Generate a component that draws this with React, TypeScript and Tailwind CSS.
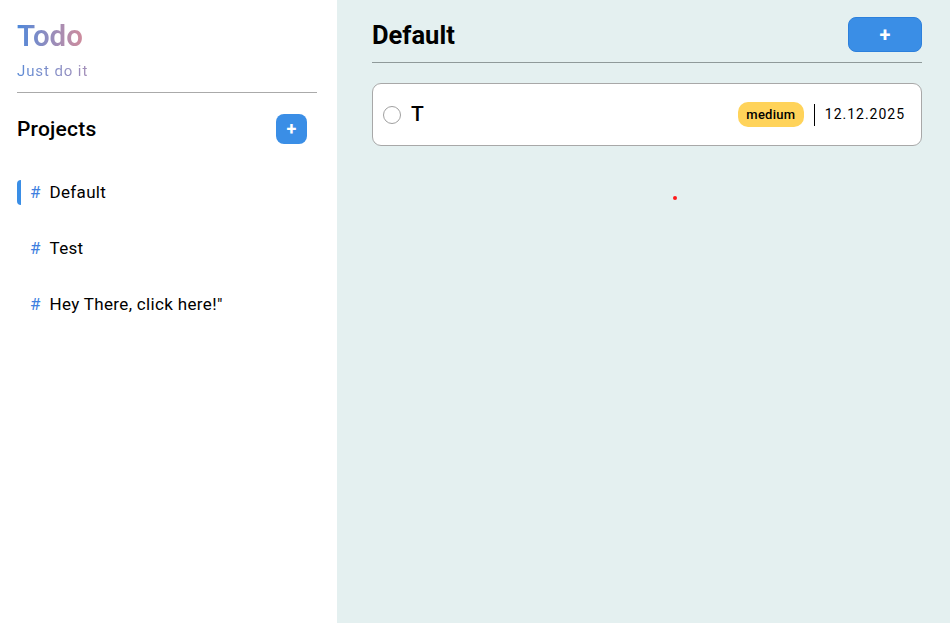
import React from "react";

const projects = ["Default", "Test", 'Hey There, click here!"'];

export default function App() {
  return (
    <div className="flex h-[623px] w-[950px] font-['Roboto',sans-serif] text-black">
      <aside className="flex w-[337px] flex-col bg-white px-[17px] pt-[18px]">
        <div className="mr-[3px] border-b border-[#aaaaaa] pb-[12px]">
          <h1 className="w-fit bg-gradient-to-r from-[#4a87da] to-[#cf8b9b] bg-clip-text text-[29.5px] font-semibold leading-[36px] text-transparent">
            Todo
          </h1>
          <p className="mt-[8px] w-fit bg-gradient-to-r from-[#5a8ad6] to-[#a48fb8] bg-clip-text text-[15px] leading-[18px] tracking-[0.06em] text-transparent">
            Just do it
          </p>
        </div>
        <div className="mt-[21px] flex items-center justify-between pr-[13px]">
          <h2 className="text-[21px] font-medium leading-[30px] tracking-[0.01em]">Projects</h2>
          <button className="flex h-[30px] w-[31px] items-center justify-center rounded-[8px] bg-[#3a8ee6] text-[18px] font-bold leading-none text-white">
            +
          </button>
        </div>
        <ul className="mt-[36px] flex flex-col gap-[31px]">
          {projects.map((p, i) => (
            <li key={p} className="flex h-[25px] items-center">
              <span className={`h-[25px] w-[4px] rounded-l-[4px] ${i === 0 ? "bg-[#3a8ee6]" : "bg-transparent"}`} />
              <span className="ml-[9px] text-[17px] text-[#3f7fe0]">#</span>
              <span className="ml-[9px] text-[17px] tracking-[0.02em]">{p}</span>
            </li>
          ))}
        </ul>
      </aside>
      <main className="relative flex-1 bg-[#e4f0f0] px-[35px] pt-[17px] pr-[28px]">
        <div className="flex items-center justify-between border-b border-[#8f9a9a] pb-[10px]">
          <h2 className="text-[25.5px] font-bold leading-[34px]">Default</h2>
          <button className="flex h-[35px] w-[74px] items-center justify-center rounded-[8px] border border-[#2c80dc] bg-[#3a8ee6] text-[20px] font-bold leading-none text-white">
            +
          </button>
        </div>
        <div className="mt-[20px] flex h-[63px] items-center rounded-[9px] border border-[#a8a8a8] bg-white pl-[10px] pr-[16px]">
          <span className="h-[18px] w-[18px] rounded-full border border-[#a0a0a0]" />
          <span className="ml-[10px] text-[21px] font-medium">T</span>
          <span className="ml-auto flex h-[25px] items-center rounded-[10px] bg-[#ffd35a] px-[8.5px] text-[13px] font-medium tracking-[0.02em]">
            medium
          </span>
          <span className="ml-[10px] h-[22px] w-px bg-black" />
          <span className="ml-[10px] text-[14px] tracking-[0.07em]">12.12.2025</span>
        </div>
        <span className="absolute left-[336px] top-[196px] h-[4px] w-[4px] rounded-full bg-[#ff1a1a]" />
      </main>
    </div>
  );
}
